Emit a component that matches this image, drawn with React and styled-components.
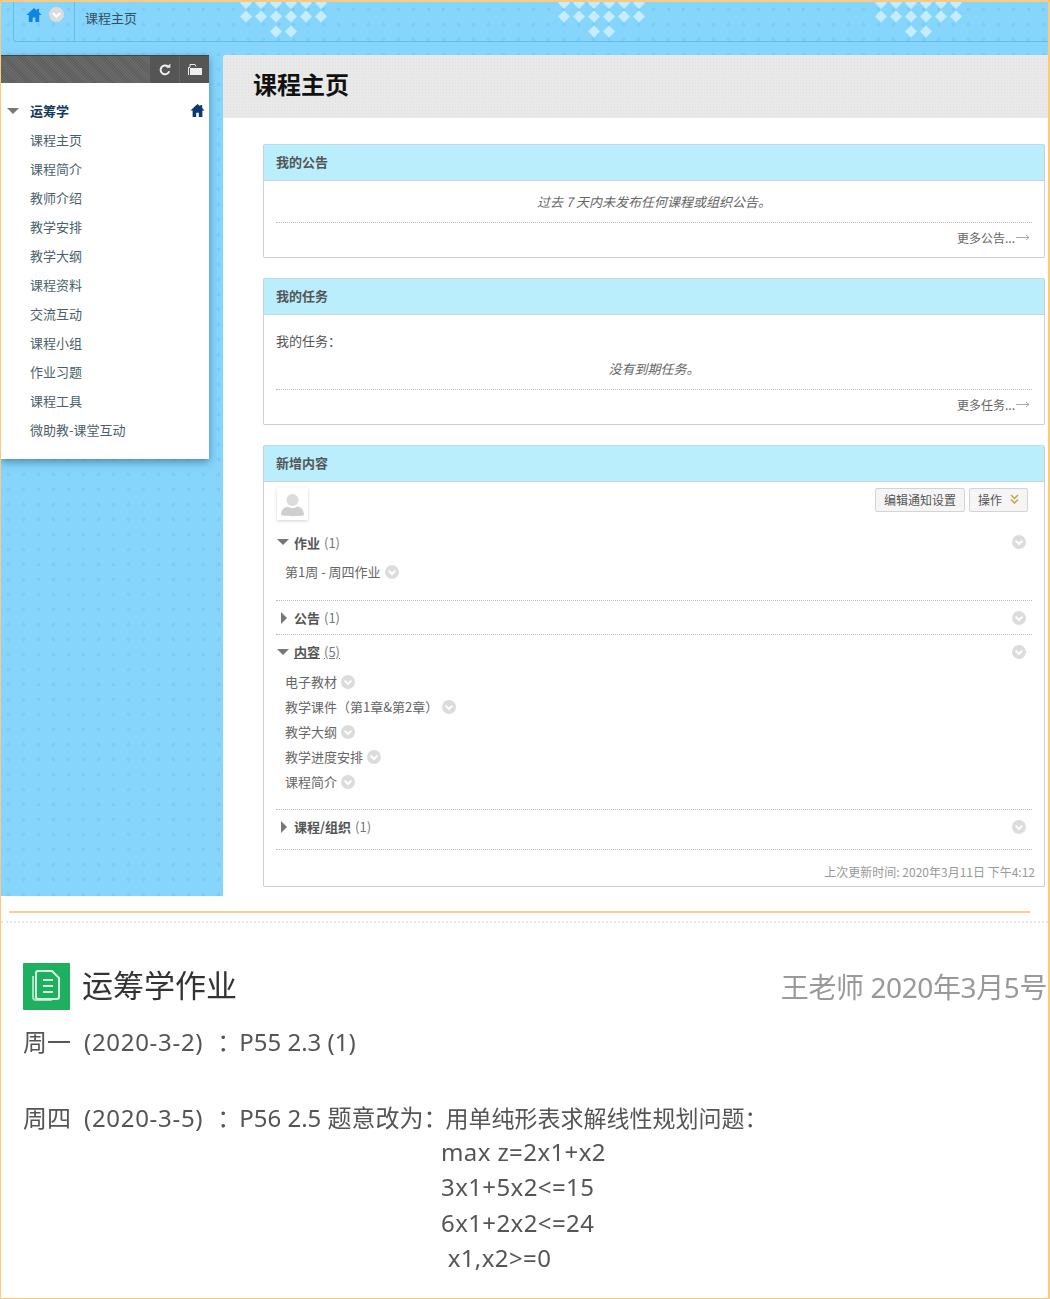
import React from "react";
import styled, { createGlobalStyle } from "styled-components";

const Global = createGlobalStyle`
  html, body { margin: 0; padding: 0; background: #fff; }
  body { font-family: "Noto Sans CJK SC", "Noto Sans", sans-serif; }
  * { box-sizing: border-box; }
`;

const Page = styled.div`
  width: 1050px; height: 1299px; border: 1px solid #fbc97f; border-width: 2px 2px 1px 1px;
  background: #fff; overflow: hidden; display: flex; flex-direction: column;
`;
const Top = styled.div`
  height: 894px; flex: none; display: flex; flex-direction: column; position: relative;
  background-color: #86d5fd;
  background-image: radial-gradient(circle at 50% 50%, #7acdf8 1.4px, transparent 2.2px);
  background-size: 15px 15px;
`;
const Decor = styled.svg`position: absolute; left: 0; top: 0;`;
const Crumbs = styled.div`
  position: relative; height: 40px; margin-left: 12px; flex: none; display: flex; align-items: flex-start;
  border-left: 1px solid #62bfe6; border-bottom: 1px solid #62bfe6; border-bottom-left-radius: 3px;
`;
const CrumbIcons = styled.div`
  width: 61px; height: 100%; padding: 5px 0 0 12px; display: flex; gap: 7px; align-items: flex-start;
  border-right: 1px solid #62bfe6;
`;
const CrumbText = styled.span`margin-left: 10px; margin-top: 6px; font-size: 13px; line-height: 20px; color: #33505f;`;
const Row = styled.div`
  position: relative; flex: 1; display: flex; gap: 14px; margin-top: 13px; align-items: stretch;
`;
const Sidebar = styled.aside`
  width: 208px; height: 404px; flex: none; background: #fff; box-shadow: 0 3px 8px rgba(40,90,120,.6);
`;
const SideBar = styled.div`
  height: 28px; display: flex; justify-content: flex-end;
  background: repeating-linear-gradient(45deg, #6b6b6b 0 1px, #5e5e5e 1px 2px);
  border-top: 1px solid #444;
`;
const SideTool = styled.div`
  width: 30px; background: #555; display: flex; align-items: center; justify-content: center;
  border-left: 1px solid #666;
`;
const SideList = styled.ul`list-style: none; margin: 0; padding: 13px 0 0 0;`;
const SideHead = styled.li`
  height: 29px; display: flex; align-items: center; padding: 0 4px 0 6px; color: #123a5a; font-size: 13px; font-weight: 700;
`;
const SideHeadText = styled.span`margin-left: 11px; flex: 1;`;
const SideItem = styled.li`height: 29px; line-height: 29px; padding-left: 29px; font-size: 13px; color: #4a5f6b;`;

const Main = styled.main`flex: 1; background: #fff; border-top-left-radius: 4px; overflow: hidden;`;
const TitleBar = styled.div`
  height: 63px; padding: 0 0 5px 30px; display: flex; align-items: center;
  background-color: #e9e9e9;
  background-image: radial-gradient(circle, #dedede 0.6px, transparent 0.8px);
  background-size: 3px 3px;
`;
const Title = styled.h1`margin: 0; font-size: 24px; font-weight: 700; color: #111; line-height: 1;`;
const Panels = styled.div`padding: 26px 3px 0 40px; display: flex; flex-direction: column; gap: 20px;`;
const Panel = styled.section`border: 1px solid #cfcfcf; border-top-color: #bcdde8; border-radius: 2px;`;
const PanelHead = styled.h2`
  margin: 0; height: 36px; padding: 0 12px 3px; display: flex; align-items: center; background: #bbeefd;
  font-size: 13px; font-weight: 700; color: #555; border-bottom: 1px solid #c5d6dc;
`;
const PanelBody = styled.div`padding: 0 12px;`;
const Muted = styled.div`
  text-align: center; font-style: italic; font-size: 13px; color: #666; height: ${p => p.$h}px; line-height: ${p => p.$lh}px;
  border-bottom: 1px dotted #bbb;
`;
const Plain = styled.div`font-size: 13px; color: #555; height: 36px; padding-top: 15px; line-height: 22px;`;
const More = styled.div`
  height: 34px; display: flex; justify-content: flex-end; align-items: center; padding: 0 2px 5px 0;
  font-size: 12px; color: #666; gap: 1px;
`;
const Tools = styled.div`height: 43px; display: flex; align-items: flex-start; padding-top: 6px;`;
const Avatar = styled.div`
  width: 31px; height: 32px; margin-left: 1px; background: #fff; box-shadow: 0 1px 3px rgba(0,0,0,.18); display: flex; align-items: center; justify-content: center;
`;
const ToolButtons = styled.div`margin-left: auto; margin-right: 4px; display: flex; gap: 4px;`;
const ToolButton = styled.button`
  height: 24px; padding: 0 8px 2px; border: 1px solid #d4d4d4; border-radius: 2px; background: #f5f5f5;
  font: 12px "Noto Sans CJK SC", sans-serif; color: #555; display: flex; align-items: center; gap: 8px;
`;
const Group = styled.div`border-bottom: 1px dotted #bbb; padding-bottom: ${p => p.$pb || 0}px;`;
const GroupHead = styled.div`height: ${p => p.$h || 34}px; display: flex; align-items: center; padding-left: 1px; font-size: 13px; color: #777;`;
const GroupTitle = styled.span`
  font-weight: 700; color: #555; margin: 0 4px 0 5px;
  text-decoration: ${p => (p.$u ? "underline" : "none")};
`;
const GroupCount = styled.span`text-decoration: ${p => (p.$u ? "underline" : "none")};`;
const Items = styled.div`padding: ${p => p.$pt || 0}px 0 0 9px; display: flex; flex-direction: column;`;
const Item = styled.div`height: 25px; display: flex; align-items: center; gap: 4px; font-size: 13px; color: #666;`;
const Right = styled.span`margin-left: auto; margin-right: 6px; display: flex;`;
const Updated = styled.div`height: 36px; padding-top: 7px; margin-right: -3px; display: flex; align-items: center; justify-content: flex-end; font-size: 12px; color: #999;`;

const Sep = styled.div`
  height: 2px; margin: 15px 18px 0 8px; background: #fbcf8d; flex: none;
`;
const Note = styled.div`
  flex: 1; margin-top: 8px; padding: 39px 0 0 22px; color: #555; font-family: "Noto Sans", "Noto Sans CJK SC", sans-serif;
  border-top: 2px dotted #e6e8ee; filter: blur(0.4px);
`;
const NoteHead = styled.div`display: flex; align-items: center; height: 48px;`;
const NoteTitle = styled.span`margin-left: 12px; padding-bottom: 5px; font-size: 31px; color: #333; font-family: "Noto Sans CJK SC", sans-serif;`;
const NoteMeta = styled.span`margin-left: auto; font-size: 28px; color: #999; letter-spacing: -.4px; margin-right: 1px; white-space: nowrap;`;
const Line = styled.p`margin: ${p => p.$mt || 0}px 0 0; font-size: 24px; line-height: 34px; height: 34px; color: #555; white-space: nowrap;`;
const Gap = styled.span`margin-left: ${p => p.$w}px;`;
const Dated = styled.span`letter-spacing: .7px;`;
const Rest = styled.span`font-size: 23px;`;
const Formula = styled.div`margin: -1px 0 0 418px; display: flex; flex-direction: column;`;
const FormulaLine = styled.div`height: 35.300px; line-height: 35px; font-size: 24px; letter-spacing: .4px; color: #555; white-space: pre;`;

const Chev = ({ size = 14 }) => (
  <svg width={size} height={size} viewBox="0 0 14 14" aria-hidden="true">
    <circle cx="7" cy="7" r="7" fill="#dcdcdc" />
    <path d="M3.600 5.600 7 9l3.400-3.400" fill="none" stroke="#fff" strokeWidth="2" />
  </svg>
);
const Home = ({ color, size = 16 }) => (
  <svg width={size} height={size} viewBox="0 0 16 16" aria-hidden="true">
    <path fill={color} d="M8 1 0.500 8h2.300v7h3.800v-4.600h2.800V15h3.800V8h2.300L13 5.200V2h-2v1.400z" />
  </svg>
);
const Tri = ({ open }) => (
  <svg width="12" height="12" viewBox="0 0 12 12" aria-hidden="true">
    {open ? <path d="M0 3h12L6 9z" fill="#777" /> : <path d="M4 0l6 6-6 6z" fill="#777" />}
  </svg>
);
const LongArrow = () => (
  <svg width="14" height="7" viewBox="0 0 14 7" aria-hidden="true">
    <path d="M0 3.500h13M10 1l3 2.500L10 6" fill="none" stroke="#aaa" />
  </svg>
);

const groups = [0, 318, 635];
const spots = [[1, 245], [1, 260], [1, 275], [1, 290], [1, 305], [1, 320], [14.500, 245], [14.500, 260], [14.500, 275], [14.500, 290], [14.500, 305], [14.500, 320], [29.500, 275], [29.500, 290]];
const Diamonds = () => (
  <Decor width="1050" height="40" aria-hidden="true">
    {groups.map(dx => spots.map(([y, x]) => (
      <path key={dx + "-" + x + "-" + y} d={`M${x + dx} ${y - 6}L${x + dx + 6} ${y}L${x + dx} ${y + 6}L${x + dx - 6} ${y}Z`} fill="#c6edfd" />
    )))}
  </Decor>
);

const menu = ["课程主页", "课程简介", "教师介绍", "教学安排", "教学大纲", "课程资料", "交流互动", "课程小组", "作业习题", "课程工具", "微助教-课堂互动"];
const contents = ["电子教材", "教学课件（第1章&第2章）", "教学大纲", "教学进度安排", "课程简介"];

export default function App() {
  return (
    <Page>
      <Global />
      <Top>
        <Diamonds />
        <Crumbs>
          <CrumbIcons>
            <Home color="#0f84e0" size={16} />
            <Chev size={15} />
          </CrumbIcons>
          <CrumbText>课程主页</CrumbText>
        </Crumbs>
        <Row>
          <Sidebar>
            <SideBar>
              <SideTool>
                <svg width="14" height="14" viewBox="0 0 14 14" aria-hidden="true">
                  <path d="M11.200 8.200A4.400 4.400 0 1 1 10 3.600" fill="none" stroke="#eee" strokeWidth="2" />
                  <path d="M8 4.800h4.400V0.600z" fill="#eee" />
                </svg>
              </SideTool>
              <SideTool>
                <svg width="16" height="14" viewBox="0 0 16 14" aria-hidden="true">
                  <path d="M1.500 12V4.500H3M3 4V1.500h5L9 3.500" fill="none" stroke="#eee" />
                  <path d="M3 5h12v7H3z" fill="#eee" />
                </svg>
              </SideTool>
            </SideBar>
            <SideList>
              <SideHead>
                <Tri open />
                <SideHeadText>运筹学</SideHeadText>
                <Home color="#10386e" size={15} />
              </SideHead>
              {menu.map(m => <SideItem key={m}>{m}</SideItem>)}
            </SideList>
          </Sidebar>
          <Main>
            <TitleBar><Title>课程主页</Title></TitleBar>
            <Panels>
              <Panel>
                <PanelHead>我的公告</PanelHead>
                <PanelBody>
                  <Muted $h={42} $lh={41}>过去 7 天内未发布任何课程或组织公告。</Muted>
                  <More>更多公告...<LongArrow /></More>
                </PanelBody>
              </Panel>
              <Panel>
                <PanelHead>我的任务</PanelHead>
                <PanelBody>
                  <Plain>我的任务：</Plain>
                  <Muted $h={39} $lh={36}>没有到期任务。</Muted>
                  <More>更多任务...<LongArrow /></More>
                </PanelBody>
              </Panel>
              <Panel>
                <PanelHead>新增内容</PanelHead>
                <PanelBody>
                  <Tools>
                    <Avatar>
                      <svg width="25" height="25" viewBox="0 0 25 25" aria-hidden="true">
                        <circle cx="12.500" cy="8" r="6" fill="#dcdcdc" />
                        <path d="M1 23c0-5 3-8 7-8.500 2 2 7 2 9 0 4 .5 7 3.500 7 8.500 0 1.500-23 1.500-23 0z" fill="#cfcfcf" />
                      </svg>
                    </Avatar>
                    <ToolButtons>
                      <ToolButton>编辑通知设置</ToolButton>
                      <ToolButton>操作
                        <svg width="9" height="10" viewBox="0 0 9 10" aria-hidden="true">
                          <path d="M1 1l3.500 3.500L8 1M1 5.500 4.500 9 8 5.500" fill="none" stroke="#c9a24b" strokeWidth="1.500" />
                        </svg>
                      </ToolButton>
                    </ToolButtons>
                  </Tools>
                  <Group $pb={16}>
                    <GroupHead>
                      <Tri open /><GroupTitle>作业</GroupTitle>(1)<Right><Chev /></Right>
                    </GroupHead>
                    <Items>
                      <Item>第1周 - 周四作业 <Chev /></Item>
                    </Items>
                  </Group>
                  <Group>
                    <GroupHead $h={33}>
                      <Tri /><GroupTitle>公告</GroupTitle>(1)<Right><Chev /></Right>
                    </GroupHead>
                  </Group>
                  <Group $pb={15}>
                    <GroupHead $h={33}>
                      <Tri open /><GroupTitle $u>内容</GroupTitle><GroupCount $u>(5)</GroupCount><Right><Chev /></Right>
                    </GroupHead>
                    <Items $pt={1}>
                      {contents.map(c => <Item key={c}>{c}<Chev /></Item>)}
                    </Items>
                  </Group>
                  <Group $pb={6}>
                    <GroupHead $h={33}>
                      <Tri /><GroupTitle>课程/组织</GroupTitle>(1)<Right><Chev /></Right>
                    </GroupHead>
                  </Group>
                  <Updated>上次更新时间: 2020年3月11日 下午4:12</Updated>
                </PanelBody>
              </Panel>
            </Panels>
          </Main>
        </Row>
      </Top>
      <Sep />
      <Note>
        <NoteHead>
          <svg width="47" height="47" viewBox="0 0 47 47" aria-hidden="true">
            <rect width="47" height="47" rx="1" fill="#1fb05f" />
            <path d="M10 13v21q0 3 3 3h16" fill="none" stroke="#a5e3bd" strokeWidth="2" />
            <path d="M13 10q0-2 2-2h14l7 7v19q0 2-2 2H15q-2 0-2-2z" fill="none" stroke="#d6f5e2" strokeWidth="2" />
            <path d="M20 17h10M20 23h10M20 29h10" stroke="#d6f5e2" strokeWidth="2" />
          </svg>
          <NoteTitle>运筹学作业</NoteTitle>
          <NoteMeta>王老师 2020年3月5号</NoteMeta>
        </NoteHead>
        <Line $mt={15}>周一<Gap $w={13} /><Dated>(2020-3-2)</Dated><Gap $w={14} />：<Gap $w={-2} />P55 2.3 (1)</Line>
        <Line $mt={42}>周四<Gap $w={13} /><Dated>(2020-3-5)</Dated><Gap $w={14} />：<Gap $w={-2} />P56 2.5 题意改为：<Gap $w={-2} /><Rest>用单纯形表求解线性规划问题：</Rest></Line>
        <Formula>
          <FormulaLine>max z=2x1+x2</FormulaLine>
          <FormulaLine>3x1+5x2&lt;=15</FormulaLine>
          <FormulaLine>6x1+2x2&lt;=24</FormulaLine>
          <FormulaLine> x1,x2&gt;=0</FormulaLine>
        </Formula>
      </Note>
    </Page>
  );
}
